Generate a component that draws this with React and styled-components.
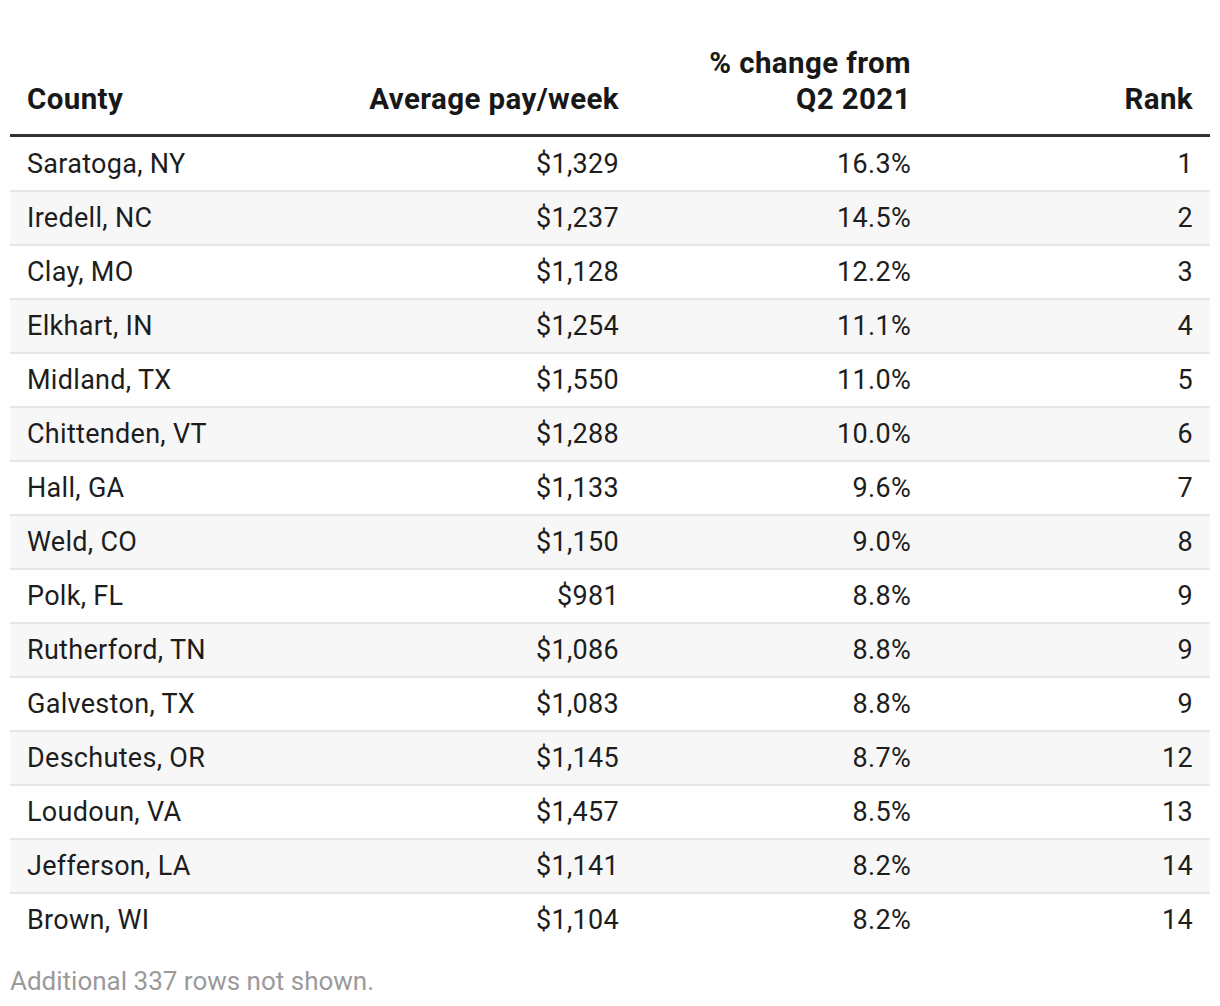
import styled, { createGlobalStyle } from "styled-components"

const GlobalStyle = createGlobalStyle`
  body {
    margin: 0;
    background: #ffffff;
    font-family: Roboto, "Liberation Sans", Arial, sans-serif;
    color: #1d1d1d;
  }
`

const Page = styled.div`
  padding: 45px 10px 0 10px;
  width: 1200px;
`

const Table = styled.div`
  display: grid;
  grid-template-columns: 320px 306px 292px 282px;
  width: 1200px;
`

const HeadCell = styled.div`
  display: flex;
  align-items: flex-end;
  justify-content: ${(props) => (props.right ? "flex-end" : "flex-start")};
  text-align: ${(props) => (props.right ? "right" : "left")};
  padding: 0 17px 17px 17px;
  font-size: 29.5px;
  font-weight: 700;
  line-height: 36px;
  letter-spacing: 0.4px;
  color: #181818;
  border-bottom: 3px solid #333333;
`

const Cell = styled.div`
  display: flex;
  align-items: center;
  justify-content: ${(props) => (props.right ? "flex-end" : "flex-start")};
  height: ${(props) => (props.first ? "53px" : "52px")};
  padding: 0 17px;
  font-size: 27px;
  letter-spacing: 0.3px;
  color: #1d1d1d;
  background: ${(props) => (props.striped ? "#f7f7f7" : "#ffffff")};
  border-bottom: ${(props) => (props.last ? "0" : "2px solid #e6e6e6")};
  font-variant-numeric: tabular-nums;
`

const Footer = styled.div`
  margin-top: 20px;
  font-size: 26px;
  line-height: 30px;
  color: #9a9a9a;
`

const rows = [
  ["Saratoga, NY", "$1,329", "16.3%", "1"],
  ["Iredell, NC", "$1,237", "14.5%", "2"],
  ["Clay, MO", "$1,128", "12.2%", "3"],
  ["Elkhart, IN", "$1,254", "11.1%", "4"],
  ["Midland, TX", "$1,550", "11.0%", "5"],
  ["Chittenden, VT", "$1,288", "10.0%", "6"],
  ["Hall, GA", "$1,133", "9.6%", "7"],
  ["Weld, CO", "$1,150", "9.0%", "8"],
  ["Polk, FL", "$981", "8.8%", "9"],
  ["Rutherford, TN", "$1,086", "8.8%", "9"],
  ["Galveston, TX", "$1,083", "8.8%", "9"],
  ["Deschutes, OR", "$1,145", "8.7%", "12"],
  ["Loudoun, VA", "$1,457", "8.5%", "13"],
  ["Jefferson, LA", "$1,141", "8.2%", "14"],
  ["Brown, WI", "$1,104", "8.2%", "14"],
]

function App() {
  return (
    <>
      <GlobalStyle />
      <Page>
        <Table>
          <HeadCell>County</HeadCell>
          <HeadCell right>Average pay/week</HeadCell>
          <HeadCell right>
            % change from
            <br />
            Q2 2021
          </HeadCell>
          <HeadCell right>Rank</HeadCell>
          {rows.map((row, i) =>
            row.map((value, j) => (
              <Cell
                key={`${i}-${j}`}
                right={j > 0}
                first={i === 0}
                striped={i % 2 === 1}
                last={i === rows.length - 1}
              >
                {value}
              </Cell>
            ))
          )}
        </Table>
        <Footer>Additional 337 rows not shown.</Footer>
      </Page>
    </>
  )
}

export default App
